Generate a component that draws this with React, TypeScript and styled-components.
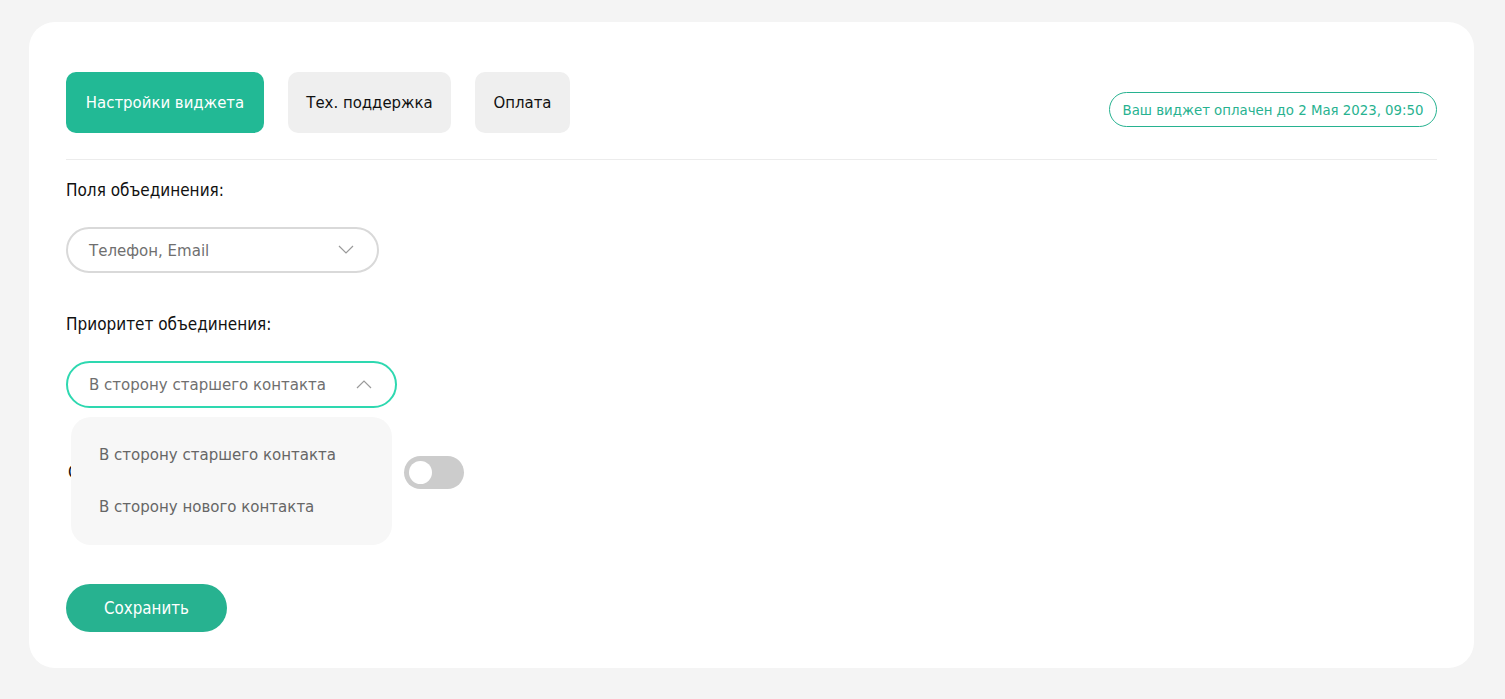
import React from "react";
import styled, { createGlobalStyle } from "styled-components";

const Global = createGlobalStyle`
  html, body { margin: 0; padding: 0; background: #f4f4f4; }
  body { font-family: "Liberation Sans Narrow", "DejaVu Sans Condensed", "Roboto", sans-serif; }
  * { box-sizing: border-box; }
`;

const Page = styled.div`
  padding: 22px 31px 31px 29px;
  background: #f4f4f4;
  min-height: 699px;
`;

const Card = styled.div`
  background: #fff;
  border-radius: 26px;
  padding: 50px 37px 36px 37px;
  height: 646px;
  display: flex;
  flex-direction: column;
`;

const TopRow = styled.div`
  display: flex;
  align-items: flex-end;
  gap: 24px;
`;

const Tab = styled.button<{ $active?: boolean; $w: number }>`
  width: ${(p) => p.$w}px;
  height: 61px;
  padding: 0;
  border: none;
  border-radius: 10px;
  font-family: inherit;
  font-size: 16.6px;
  color: ${(p) => (p.$active ? "#fff" : "#111")};
  background: ${(p) => (p.$active ? "#22b995" : "#efefef")};
  cursor: pointer;
`;

const Badge = styled.div`
  margin-left: auto;
  margin-bottom: 6px;
  width: 328px;
  height: 35px;
  display: flex;
  align-items: center;
  justify-content: center;
  border: 1px solid #27b290;
  border-radius: 18px;
  color: #27b290;
  font-size: 14.8px;
`;

const Divider = styled.div`
  height: 1px;
  background: #ececec;
  margin-top: 26px;
`;

const Label = styled.div<{ $top: number }>`
  margin-top: ${(p) => p.$top}px;
  font-size: 17px;
  line-height: 20px;
  color: #111;
`;

const SelectWrap = styled.div`
  position: relative;
  margin-top: 27px;
  align-self: flex-start;
`;

const Select = styled.div<{ $open?: boolean; $w: number }>`
  width: ${(p) => p.$w}px;
  height: ${(p) => (p.$open ? 47 : 46)}px;
  border: 2px solid ${(p) => (p.$open ? "#2ed8b0" : "#d9d9d9")};
  border-radius: 24px;
  display: flex;
  align-items: center;
  justify-content: space-between;
  padding: 0 23px 0 21px;
  font-size: 16.7px;
  color: #6f6f6f;
`;

const Menu = styled.div`
  position: absolute;
  top: 56px;
  left: 5px;
  width: 321px;
  height: 128px;
  background: #f7f7f7;
  border-radius: 20px;
  padding: 27px 0 0 28px;
  display: flex;
  flex-direction: column;
  gap: 32px;
  z-index: 2;
`;

const MenuItem = styled.div`
  font-size: 16.7px;
  line-height: 20px;
  color: #666;
`;

const ToggleRow = styled.div`
  margin-top: 48px;
  display: flex;
  align-items: center;
`;

const ToggleLabel = styled.div`
  width: 338px;
  padding-left: 2px;
  font-size: 17px;
  color: #111;
`;

const Toggle = styled.div`
  width: 60px;
  height: 33px;
  border-radius: 17px;
  background: #cccccc;
  position: relative;
`;

const Knob = styled.div`
  position: absolute;
  left: 5px;
  top: 5px;
  width: 23px;
  height: 23px;
  border-radius: 50%;
  background: #fff;
`;

const SaveButton = styled.button`
  margin-top: 95px;
  align-self: flex-start;
  width: 161px;
  height: 49px;
  border: none;
  border-radius: 25px;
  background: #27b290;
  color: #fff;
  font-family: inherit;
  font-size: 16.8px;
`;

const Chevron = ({ up }: { up?: boolean }) => (
  <svg width="16" height="9" viewBox="0 0 16 9" fill="none">
    <path
      d={up ? "M1 8 L8 1 L15 8" : "M1 1 L8 8 L15 1"}
      stroke="#9a9a9a"
      strokeWidth="1.2"
    />
  </svg>
);

export default function App() {
  return (
    <Page>
      <Global />
      <Card>
        <TopRow>
          <Tab $active $w={198}>Настройки виджета</Tab>
          <Tab $w={163}>Тех. поддержка</Tab>
          <Tab $w={95}>Оплата</Tab>
          <Badge>Ваш виджет оплачен до 2 Мая 2023, 09:50</Badge>
        </TopRow>
        <Divider />
        <Label $top={20}>Поля объединения:</Label>
        <SelectWrap>
          <Select $w={313}>
            <span>Телефон, Email</span>
            <Chevron />
          </Select>
        </SelectWrap>
        <Label $top={41}>Приоритет объединения:</Label>
        <SelectWrap>
          <Select $open $w={331}>
            <span>В сторону старшего контакта</span>
            <Chevron up />
          </Select>
          <Menu>
            <MenuItem>В сторону старшего контакта</MenuItem>
            <MenuItem>В сторону нового контакта</MenuItem>
          </Menu>
        </SelectWrap>
        <ToggleRow>
          <ToggleLabel>Объединять контакты автоматически</ToggleLabel>
          <Toggle>
            <Knob />
          </Toggle>
        </ToggleRow>
        <SaveButton>Сохранить</SaveButton>
      </Card>
    </Page>
  );
}
